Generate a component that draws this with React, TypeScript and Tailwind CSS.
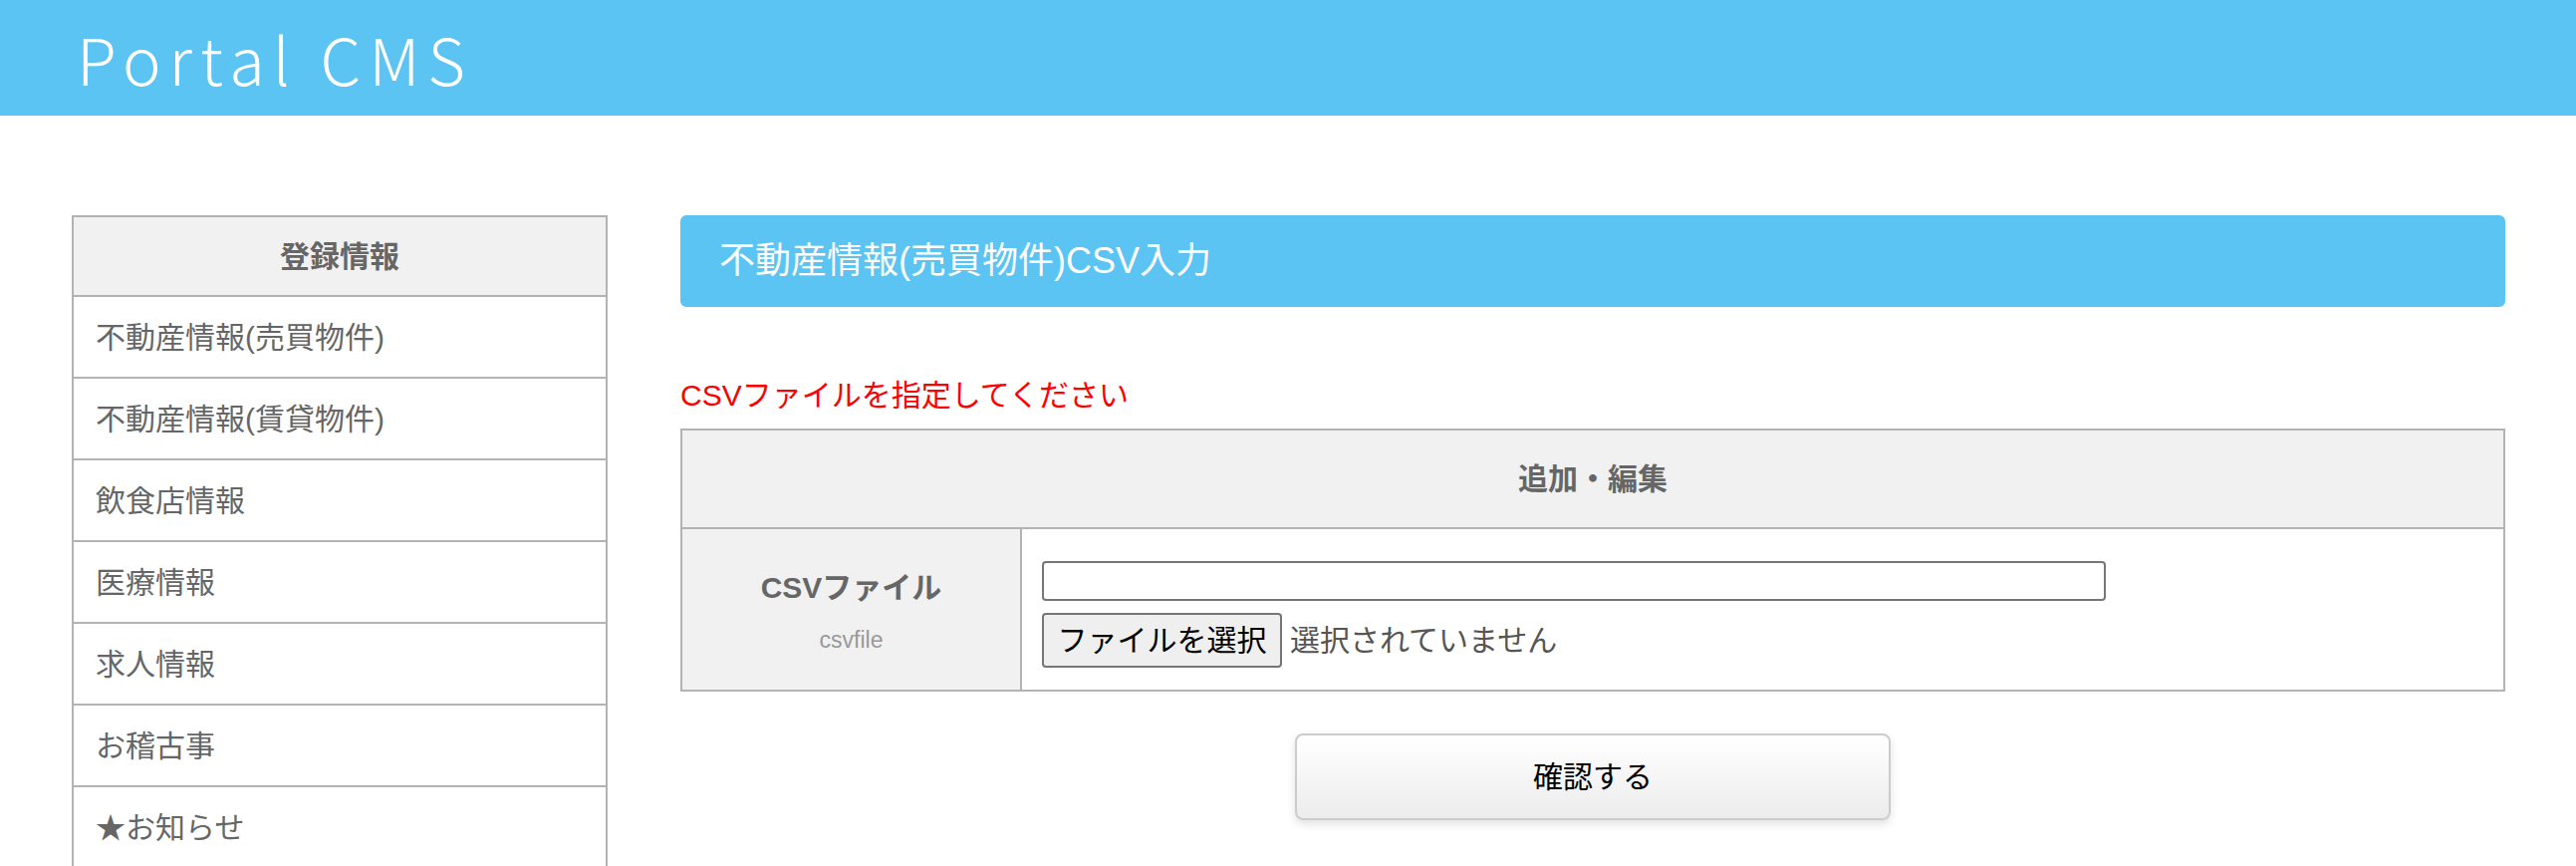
import React from "react";

const FONT = { fontFamily: '"Liberation Sans", "Noto Sans CJK JP", sans-serif' };

const menu = [
  "不動産情報(売買物件)",
  "不動産情報(賃貸物件)",
  "飲食店情報",
  "医療情報",
  "求人情報",
  "お稽古事",
  "★お知らせ",
];

export default function App() {
  return (
    <div className="min-h-screen bg-white" style={FONT}>
      <header className="h-[116px] bg-[#5bc4f3] flex items-center pl-[77px]">
        <h1
          className="text-white text-[65px] font-light tracking-[8px] leading-none"
          style={{ fontFamily: '"Noto Sans CJK JP", "Noto Sans", sans-serif' }}
        >
          Portal CMS
        </h1>
      </header>

      <div className="flex gap-[73px] pl-[72px] pr-[71px] pt-[100px]">
        <aside className="w-[538px] shrink-0 border-2 border-[#b3b3b3] text-[#666]">
          <div className="h-[80px] border-b-2 border-[#b3b3b3] bg-[#f1f1f1] flex items-center justify-center text-[30px] font-bold">
            登録情報
          </div>
          {menu.map((m) => (
            <div
              key={m}
              className="h-[82px] border-b-2 border-[#b3b3b3] flex items-center pl-[22px] text-[30px]"
            >
              {m}
            </div>
          ))}
        </aside>

        <main className="flex-1 min-w-0">
          <div className="h-[92px] rounded-[6px] bg-[#5bc4f3] flex items-center pl-[39px] text-white text-[36px]">
            不動産情報(売買物件)CSV入力
          </div>

          <p className="mt-[67px] text-[30px] leading-[44px] text-[#ff0000]">
            CSVファイルを指定してください
          </p>

          <div className="mt-[11px] border-2 border-[#b3b3b3]">
            <div className="h-[99px] bg-[#f1f1f1] border-b-2 border-[#b3b3b3] flex items-center justify-center text-[30px] font-bold text-[#666]">
              追加・編集
            </div>
            <div className="flex h-[161px]">
              <div className="w-[341px] shrink-0 bg-[#f1f1f1] border-r-2 border-[#b3b3b3] flex flex-col items-center justify-center pt-[4px]">
                <div className="text-[30px] leading-[40px] font-bold text-[#666]">CSVファイル</div>
                <div className="mt-[16px] text-[23px] leading-[32px] text-[#999]">csvfile</div>
              </div>
              <div className="flex-1 pl-[20px] pt-[32px] flex flex-col items-start">
                <div className="w-[1068px] h-[40px] border-2 border-[#767676] rounded-[4px] bg-white" />
                <div className="mt-[12px] flex items-center">
                  <div className="h-[55px] w-[241px] bg-[#efefef] border-2 border-[#767676] rounded-[4px] flex items-center justify-center text-[30px] text-black">
                    ファイルを選択
                  </div>
                  <span className="ml-[8px] text-[30px] text-[#555]">選択されていません</span>
                </div>
              </div>
            </div>
          </div>

          <div className="mt-[42px] flex justify-center">
            <div className="w-[598px] h-[87px] rounded-[8px] border-2 border-[#cccccc] bg-gradient-to-b from-white to-[#ececec] shadow-[0_4px_8px_rgba(0,0,0,0.12)] flex items-center justify-center text-[30px] text-black">
              確認する
            </div>
          </div>
        </main>
      </div>
    </div>
  );
}
